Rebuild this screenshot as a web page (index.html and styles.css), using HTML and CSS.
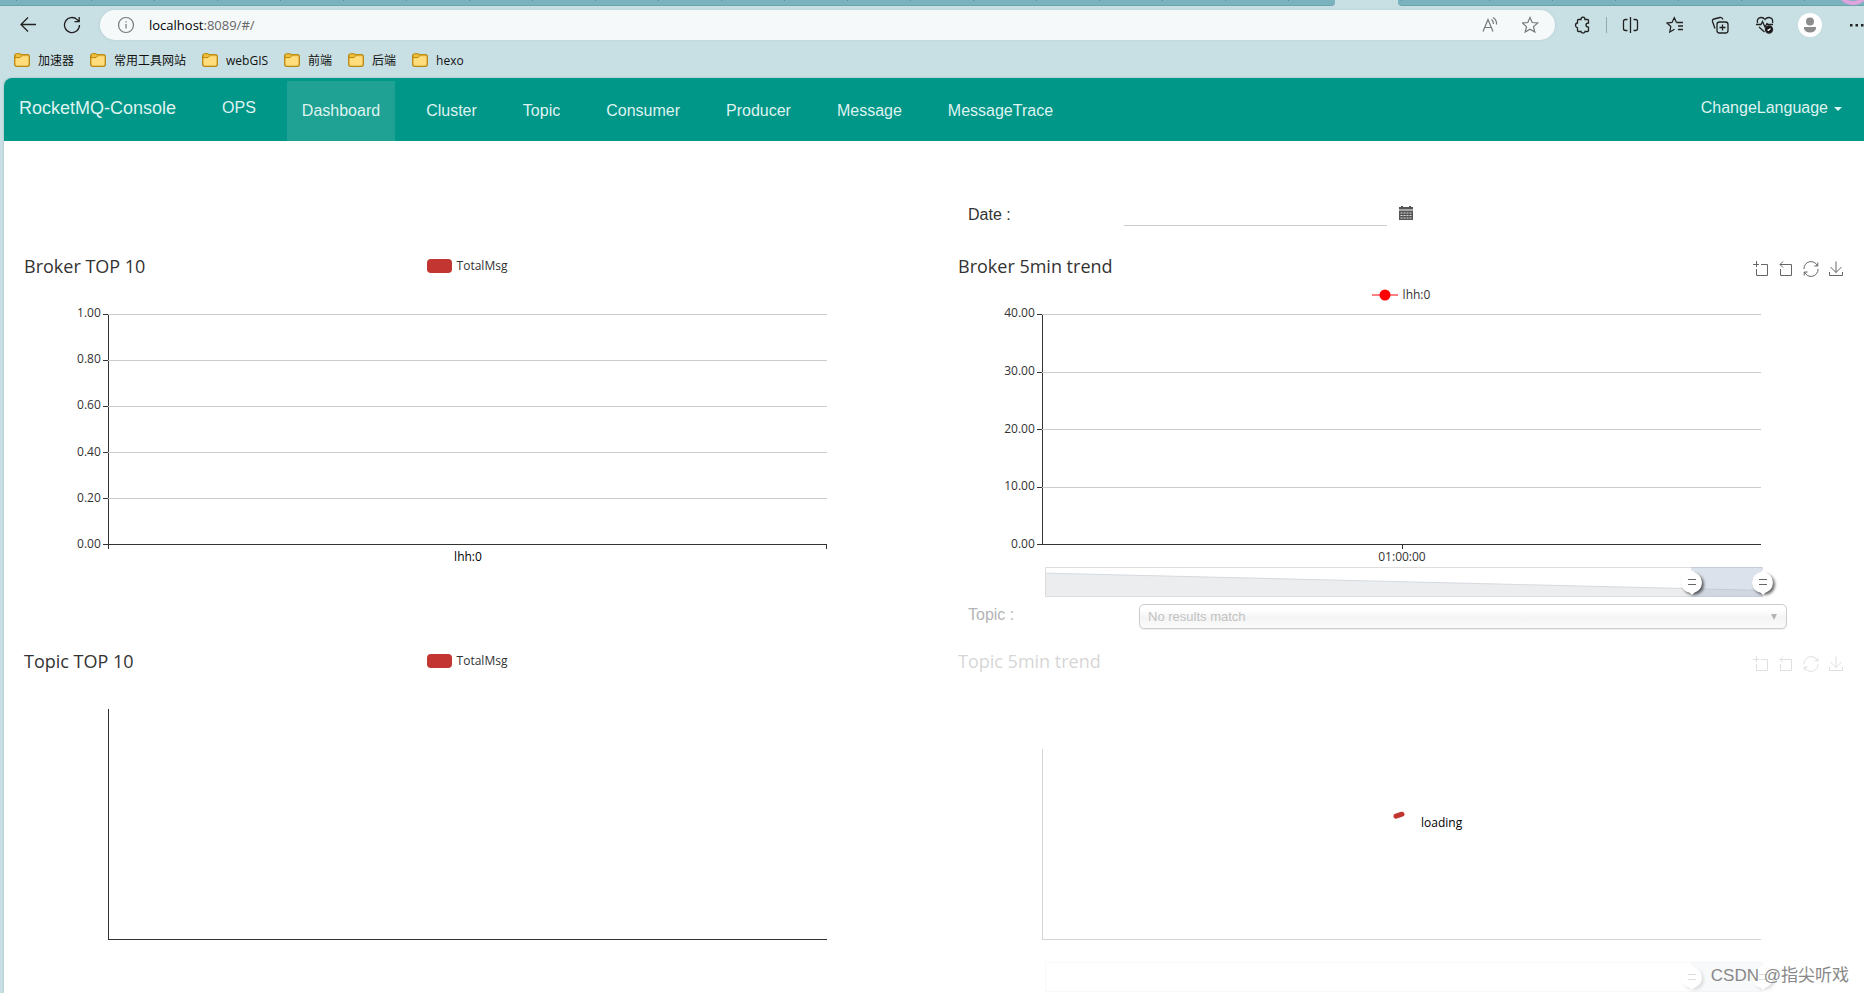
FILE: index.html
```html
<!DOCTYPE html>
<html lang="en">
<head>
<meta charset="utf-8">
<title>RocketMQ-Console</title>
<link rel="stylesheet" href="styles.css">
</head>
<body>
<svg class="defs" aria-hidden="true">
  <symbol id="folder" viewBox="0 0 16 14"><rect x=".7" y="1.7" width="14.6" height="11.6" rx="2" fill="#ffdc7c" stroke="#b8860b" stroke-width="1.3"/><path d="M1 5V2Q1 .7 2.4.7H6L8 2.5 6 4.6H1Z" fill="#f0bf3c" stroke="#b8860b"/><path d="M7.5 2.5H14" stroke="#d9a932" stroke-width="1.4"/></symbol>
  <symbol id="zoom-area" viewBox="0 0 16 16"><path d="M0 3.5H6M3.5 0V6M8 3.5H14.500V14.500H3.500V8" /></symbol>
  <symbol id="zoom-back" viewBox="0 0 16 16"><path d="M5 .5 2 3.500 5 6.500M2 3.500H13.500V14.500H2.500V8"/></symbol>
  <symbol id="restore" viewBox="0 0 16 16"><path d="M1 8A7 7 0 0 1 14.500 5M15 8A7 7 0 0 1 1.500 11M14.800 1.500V5H11.300M1.200 14.500V11H4.700"/></symbol>
  <symbol id="save" viewBox="0 0 16 16"><path d="M8 .5V11.500M2.500 6 8 11.500 13.500 6M1.500 11V14.500H14.500V11"/></symbol>
</svg>

<header class="browser">
  <div class="tabs"><div class="tab-group tab-group-left"></div><div class="tab-active"></div><div class="tab-group tab-group-right"><span class="ring"></span></div></div>
  <div class="toolbar">
    <button class="tool back" aria-label="Back"><svg width="18" height="18" viewBox="0 0 18 18"><path d="M17 8.500H2M9 1.500 2 8.500 9 15.500"/></svg></button>
    <button class="tool reload" aria-label="Reload"><svg width="18" height="18" viewBox="0 0 18 18"><path d="M16.500 9A7.500 7.500 0 1 1 14.200 3.600L16 5.500M16.200 1V5.700H11.500"/></svg></button>
    <div class="address">
      <svg class="info" width="18" height="18" viewBox="0 0 18 18"><circle cx="9" cy="9" r="7.500"/><path d="M9 8V12.500M9 5.200V6.500"/></svg>
      <span class="url"><b>localhost</b>:8089/#/</span>
      <button class="tool grey" aria-label="Read aloud"><svg width="18" height="18" viewBox="0 0 18 18"><path d="M1 15.500 6 3.500 11 15.500M2.700 11.500H9.300M9.500 3.500Q11.500 5 11.500 8M11 1.500Q15 4 14.500 8.500"/></svg></button>
      <button class="tool grey" aria-label="Add favorite"><svg width="18" height="18" viewBox="0 0 18 18"><path d="M8 1.500 10.200 6.500 15.700 7 11.500 10.600 12.800 16 8 13.200 3.200 16 4.500 10.600 .3 7 5.800 6.500Z"/></svg></button>
    </div>
    <div class="tools">
      <button class="tool" aria-label="Extensions"><svg width="18" height="18" viewBox="0 0 18 18"><path d="M4.500 3.500H7Q7 1.200 9 1.200T11 3.500H13.500Q14.500 3.500 14.500 4.500V7Q12 7 12 9T14.500 11.200V14.500Q14.500 15.500 13.500 15.500H11Q11 17 9 17T7 15.500H4.500Q3.500 15.500 3.500 14.500V12Q1.500 11.500 1.500 9.300T3.500 7V4.500Q3.500 3.500 4.500 3.500Z"/></svg></button>
      <span class="divider"></span>
      <button class="tool" aria-label="Split screen"><svg width="18" height="18" viewBox="0 0 18 18"><path d="M9.500 1V17M6.500 3.500H4.500Q2.500 3.500 2.500 5.500V12.500Q2.500 14.500 4.500 14.500H6.500M12.500 3.500H14.500Q16.500 3.500 16.500 5.500V12.500Q16.500 14.500 14.500 14.500H12.500"/></svg></button>
      <button class="tool" aria-label="Favorites"><svg width="18" height="18" viewBox="0 0 18 18"><path d="M10.500 6.500H17M12 10H17M12 13.500H17M10.500 6.500 8.300 1.800 6 6.500 1 7 4.800 10.600 3.800 16 8.500 13.200"/></svg></button>
      <button class="tool" aria-label="Collections"><svg width="18" height="18" viewBox="0 0 18 18"><rect x="6" y="6" width="11" height="11" rx="2.500"/><path d="M11.500 8.500V14.500M8.500 11.500H14.500M4 12.500 1.500 5.500Q1 3.500 3 3L9 1.500Q11 1 12 3.500"/></svg></button>
      <button class="tool" aria-label="Browser essentials"><svg width="18" height="18" viewBox="0 0 18 18"><path d="M1.500 7Q.5 2 4.800 1.500 7.500 1.300 9 3.500 10.500 1.300 13.200 1.500 17.500 2 16.500 7M0 8.500H5L6.500 5.500 9 11 11 7.500 12 8.500H17M3 11 8.500 16"/><circle cx="13" cy="13.500" r="3.500" fill="#111"/><path d="M11.500 13.700 12.500 14.500 14.500 12.500" class="white"/></svg></button>
      <button class="tool profile" aria-label="Profile"><svg width="24" height="24" viewBox="0 0 24 24"><circle cx="12" cy="12" r="12" fill="#fff"/><circle cx="12" cy="8.500" r="4" class="person"/><path d="M6 14H18V15.500Q17 19.500 12 19.500T6 15.500Z" class="person"/></svg></button>
      <button class="tool" aria-label="More"><svg width="18" height="18" viewBox="0 0 18 18"><path class="dots" d="M4 8H6.500V10.500H4ZM9.500 8H12V10.500H9.500ZM15 8H17.500V10.500H15Z"/></svg></button>
    </div>
  </div>
  <nav class="bookmarks" aria-label="Bookmarks">
    <a href="#"><svg width="16" height="14"><use href="#folder"/></svg>加速器</a>
    <a href="#"><svg width="16" height="14"><use href="#folder"/></svg>常用工具网站</a>
    <a href="#"><svg width="16" height="14"><use href="#folder"/></svg>webGIS</a>
    <a href="#"><svg width="16" height="14"><use href="#folder"/></svg>前端</a>
    <a href="#"><svg width="16" height="14"><use href="#folder"/></svg>后端</a>
    <a href="#"><svg width="16" height="14"><use href="#folder"/></svg>hexo</a>
  </nav>
</header>

<div class="page">
  <nav class="navbar">
    <a class="brand" href="#">RocketMQ-Console</a>
    <a class="link raised" href="#">OPS</a>
    <a class="link active" href="#">Dashboard</a>
    <a class="link" href="#">Cluster</a>
    <a class="link" href="#">Topic</a>
    <a class="link" href="#">Consumer</a>
    <a class="link" href="#">Producer</a>
    <a class="link" href="#">Message</a>
    <a class="link" href="#">MessageTrace</a>
    <button class="link raised language">ChangeLanguage <span class="caret"></span></button>
  </nav>

  <main class="dashboard">
    <div class="filter date-filter">
      <label for="date">Date :</label>
      <input id="date" type="text">
      <svg width="14" height="15" viewBox="0 0 14 15"><path d="M0 2H2V1H4V2H10V1H12V2H14V4.500H0ZM0 5.500H14V15H0Z" fill="#555"/><path d="M1.500 8H12.500M1.500 10.500H12.500M1.500 13H12.500" stroke="#ddd" stroke-dasharray="2 1"/></svg>
    </div>

    <section class="chart broker-top">
      <div class="head"><h2>Broker TOP 10</h2><div class="legend"><i class="swatch"></i>TotalMsg</div></div>
      <div class="plot">
        <ul class="y-labels"><li>1.00</li><li>0.80</li><li>0.60</li><li>0.40</li><li>0.20</li><li>0.00</li></ul>
        <div class="area ends"><hr><hr><hr><hr><hr><hr></div>
      </div>
      <div class="x-label strong">lhh:0</div>
    </section>

    <section class="chart broker-trend">
      <div class="head">
        <h2>Broker 5min trend</h2>
        <div class="legend low"><svg width="26" height="12" viewBox="0 0 26 12"><path d="M0 6H26" stroke="#ff8080" stroke-width="2"/><circle cx="13" cy="6" r="5.500" fill="red"/></svg>lhh:0</div>
        <div class="toolbox"><button aria-label="Zoom"><svg><use href="#zoom-area"/></svg></button><button aria-label="Zoom reset"><svg><use href="#zoom-back"/></svg></button><button aria-label="Restore"><svg><use href="#restore"/></svg></button><button aria-label="Save"><svg><use href="#save"/></svg></button></div>
      </div>
      <div class="plot">
        <ul class="y-labels"><li>40.00</li><li>30.00</li><li>20.00</li><li>10.00</li><li>0.00</li></ul>
        <div class="area middle"><hr><hr><hr><hr><hr></div>
      </div>
      <div class="x-label">01:00:00</div>
      <div class="slider">
        <svg class="shadow" viewBox="0 0 100 30" preserveAspectRatio="none"><path d="M0 5.500 100 24V30H0Z" fill="#ebedef"/><path d="M0 5.500 100 24" fill="none" stroke="#d5dadf" vector-effect="non-scaling-stroke"/></svg>
        <div class="range"></div><span class="handle from"></span><span class="handle to"></span>
      </div>
      <div class="filter topic-filter">
        <label for="topic">Topic :</label>
        <div class="select"><select id="topic"><option>No results match</option></select></div>
      </div>
    </section>

    <section class="chart">
      <div class="head"><h2>Topic TOP 10</h2><div class="legend"><i class="swatch"></i>TotalMsg</div></div>
      <div class="plot"><div class="area bare"></div></div>
    </section>

    <section class="chart loading">
      <div class="dimmed">
        <div class="head tall">
          <h2>Topic 5min trend</h2>
          <div class="toolbox"><button aria-label="Zoom"><svg><use href="#zoom-area"/></svg></button><button aria-label="Zoom reset"><svg><use href="#zoom-back"/></svg></button><button aria-label="Restore"><svg><use href="#restore"/></svg></button><button aria-label="Save"><svg><use href="#save"/></svg></button></div>
        </div>
        <div class="plot short"><div class="area bare"></div></div>
        <div class="slider"><div class="range"></div><span class="handle from"></span><span class="handle to"></span></div>
      </div>
      <div class="spinner"><svg width="12" height="8" viewBox="0 0 12 8"><path d="M3 5.200 9 3.200" stroke="#c23531" stroke-width="5" stroke-linecap="round"/></svg><span>loading</span></div>
    </section>
  </main>
  <div class="watermark">CSDN @指尖听戏</div>
</div>
</body>
</html>
```
FILE: styles.css
```css
* { box-sizing: border-box; }
body { margin: 0; height: 100vh; overflow: hidden; display: flex; flex-direction: column; background: #c8dfe3; font-family: "Liberation Sans", Arial, sans-serif; font-size: 16px; color: #333; }
button { border: 0; padding: 0; background: none; font: inherit; color: inherit; }
a { color: inherit; text-decoration: none; }
h2, ul, hr { margin: 0; padding: 0; }
svg { display: block; fill: none; flex: none; }
.defs { position: absolute; width: 0; height: 0; }

.browser { flex: none; font-family: "Open Sans", "Noto Sans CJK SC", sans-serif; color: #111; }
.tabs { display: flex; height: 6px; }
.tab-group { position: relative; background: repeating-linear-gradient(90deg, transparent 0 62px, #5a8f9a 62px 63px) 29px 0 / auto 1px repeat-x, #7ab3be; border-bottom: 1px solid #6ba3af; overflow: hidden; }
.tab-group-left { flex: 1; border-radius: 0 0 4px 0; }
.tab-group-right { flex: 0 0 25%; border-radius: 0 0 0 4px; }
.tab-active { flex: 0 0 63px; }
.ring { position: absolute; right: -6px; bottom: 0; width: 34px; height: 34px; border: 4px solid #dfa3dd; border-radius: 50%; }
.toolbar { display: flex; align-items: center; height: 38px; padding-left: 19px; }
.tool { display: block; flex: none; stroke: #222; stroke-width: 1.3; }
.reload { margin-left: 26px; }
.grey, .info { stroke: #777; stroke-width: 1.2; }
.white { stroke: #fff; }
.address { display: flex; align-items: center; flex: 1; height: 30px; margin-left: 19px; padding: 0 15px 0 17px; border-radius: 15px; background: #f5f9fa; box-shadow: 0 0 3px #b5cdd3; gap: 22px; }
.url { flex: 1; margin-left: -8px; font-size: 13px; color: #666; }
.url b { font-weight: 400; color: #000; }
.tools { display: flex; align-items: center; gap: 27px; flex: 0 0 309px; padding-left: 19px; }
.divider { width: 1px; height: 16px; margin: 0 -13px; background: #94a9ad; }
.profile { margin: 0 -3px; stroke: none; }
.person { fill: #8c8c8c; }
.dots { fill: #222; stroke: none; }
.bookmarks { display: flex; align-items: center; gap: 16px; height: 34px; padding: 0 14px 2px; font-size: 12px; }
.bookmarks a { display: flex; align-items: center; gap: 8px; }

.page { position: relative; flex: 1; margin-left: 4px; background: #fff; border-radius: 8px 0 0 0; overflow: hidden; box-shadow: 0 0 2px #8fb0b7; }
.navbar { display: flex; height: 63px; padding: 3px 7px 0 15px; gap: 16px; background: #009688; color: #dff3f0; }
.brand { font-size: 18px; line-height: 54px; margin-right: 15px; }
.link { padding: 0 15px; line-height: 60px; }
.raised { line-height: 54px; }
.active { background: #1fa193; }
.language { display: flex; gap: 6px; align-items: center; align-self: start; margin-left: auto; }
.caret { border: 4px solid transparent; border-top-color: #dff3f0; border-bottom: 0; margin-top: 2px; }

.dashboard { display: grid; grid-template-columns: 1fr 1fr; grid-template-rows: 113px 395px auto; column-gap: 36px; padding: 0 13px 0 15px; }
.filter { display: flex; padding-left: 15px; }
.date-filter { grid-column: 2; align-items: center; padding-top: 60px; height: 85px; }
.date-filter label { flex: 0 0 156px; padding-top: 2px; }
.date-filter input { width: 263px; height: 30px; align-self: flex-end; border: 0; border-bottom: 1px solid #ccc; background: none; font: inherit; }
.date-filter svg { margin: 0 0 3px 12px; }

.chart { position: relative; font-family: "Open Sans", sans-serif; font-size: 12px; }
.head { display: grid; grid-template-columns: 1fr auto 1fr; height: 60px; padding: 0 5px; line-height: 24px; }
.head.tall { height: 100px; }
.head h2 { grid-area: 1 / 1; font-size: 18px; font-weight: 400; }
.legend { grid-area: 1 / 2; display: flex; align-items: center; gap: 5px; height: 24px; margin-right: 2px; }
.legend.low { margin-top: 29px; }
.swatch { width: 25px; height: 14px; border-radius: 4px; background: #c23531; }
.toolbox { grid-area: 1 / 3; justify-self: end; align-self: start; display: flex; gap: 9px; padding: 7px 2px 0 0; }
.toolbox svg { width: 16px; height: 16px; stroke: #666; }
.plot { display: grid; grid-template-columns: 10% 1fr 10%; height: 231px; }
.plot.short { height: 191px; }
.y-labels { list-style: none; display: flex; flex-direction: column; justify-content: space-between; margin: -9px 0 -7px; padding-right: 8px; text-align: right; line-height: 16px; }
.area { grid-column: 2; position: relative; display: flex; flex-direction: column; justify-content: space-between; margin-left: -1px; border-left: 1px solid #333; }
.area hr { height: 1px; border: 0; background: linear-gradient(90deg, #333 5px, #ccc 5px); margin-left: -6px; }
.area hr:last-child { background: #333; }
.bare { border-bottom: 1px solid #333; }
.ends::before, .ends::after, .middle::after { content: ""; position: absolute; top: 100%; width: 1px; height: 4px; background: #333; }
.ends::before { left: -1px; }
.ends::after { right: 0; }
.middle::after { left: 50%; }
.x-label { height: 22px; line-height: 24px; text-align: center; }
.strong { color: #000; }
.slider { position: relative; height: 30px; margin: 0 calc(10% - 2px) 0 calc(10% + 2px); border: 1px solid #ddd; }
.shadow { width: 100%; height: 28px; }
.range { position: absolute; top: -1px; bottom: -1px; left: 90%; right: 0; background: rgba(167, 183, 204, .4); }
.handle { position: absolute; top: 4px; width: 21px; height: 21px; margin-left: -10px; border-radius: 50%; background: linear-gradient(#666, #666) 7px 7px / 8px 1px no-repeat, linear-gradient(#666, #666) 7px 12px / 8px 1px no-repeat, #fff; box-shadow: 2px 2px 3px rgba(0, 0, 0, .6); }
.handle::before, .handle::after { content: ""; position: absolute; left: 8px; border: 3px solid transparent; }
.handle::before { bottom: 100%; margin-bottom: -1px; border-bottom-color: #fff; border-top: 0; }
.handle::after { top: 100%; margin-top: -1px; border-top-color: #fff; border-bottom: 0; }
.from { left: 90%; }
.to { left: 100%; }

.topic-filter { font: 16px "Liberation Sans", Arial, sans-serif; padding-top: 7px; align-items: flex-start; color: #b4b4b4; }
.topic-filter label { flex: 0 0 171px; line-height: 22px; }
.select { position: relative; flex: 1; margin-right: 64px; }
.select select { display: block; width: 100%; height: 25px; padding: 0 8px; appearance: none; border: 1px solid #ccc; border-radius: 5px; background: linear-gradient(#fff 20%, #f6f6f6 50%, #f4f4f4 52%, #fafafa); color: #c2c2c2; font: 13px "Liberation Sans", Arial, sans-serif; box-shadow: 0 1px 1px #eee; }
.select::after { content: ""; position: absolute; right: 10px; top: 10px; border: 3px solid transparent; border-top: 6px solid #b4b4b4; border-bottom: 0; }
.dimmed { opacity: .2; }
.dimmed .slider { margin-top: 22px; }
.spinner { position: absolute; top: 156px; left: 49%; display: flex; gap: 16px; color: #000; line-height: 36px; }
.spinner svg { margin-top: 6px; }
.watermark { position: absolute; right: 15px; bottom: 7px; font: 17px "Liberation Sans", "Noto Sans CJK SC", sans-serif; color: #888; }
```
